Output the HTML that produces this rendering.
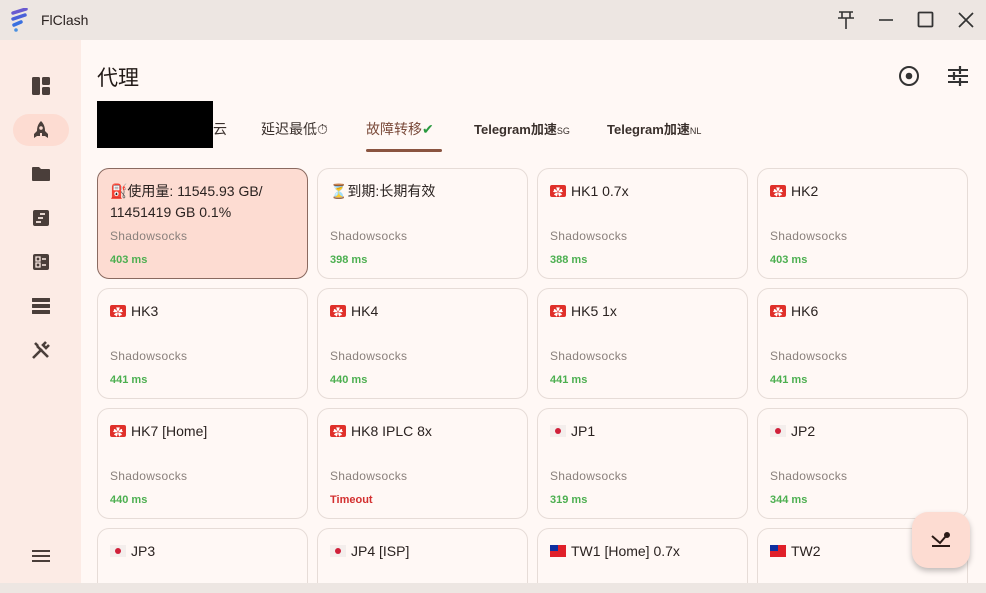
<!DOCTYPE html>
<html><head><meta charset="utf-8"><style>
*{box-sizing:border-box;margin:0;padding:0}
body{width:986px;height:593px;overflow:hidden;background:#fff8f5;font-family:"Liberation Sans","Noto Sans CJK SC",sans-serif;color:#221a17;position:relative}
.tb{position:absolute;left:0;top:0;width:986px;height:40px;background:#ede6e2}
.tb .t{position:absolute;left:41px;top:12px;font-size:14px;color:#2a2220}
.sb{position:absolute;left:0;top:40px;width:81px;height:553px;background:#fcebe5}
.ic{position:absolute;left:31px;width:20px;height:20px}
.main{position:absolute;left:81px;top:40px;width:905px;height:543px;overflow:hidden}
h1{position:absolute;left:16px;top:22px;font-size:21px;font-weight:400}
.tab{position:absolute;top:79px;font-size:14px;color:#3a302c}
.card{position:absolute;width:211px;height:111px;border:1px solid #e6dcd7;border-radius:12px;background:#fff8f5}
.card.sel{background:#fddcd2;border-color:#8a6a60}
.card .n{position:absolute;left:12px;top:12px;font-size:14px;line-height:21px;color:#2a2220}
.card .p{position:absolute;left:12px;top:60px;font-size:12px;color:#8a807c;letter-spacing:.3px}
.card .m{position:absolute;left:12px;top:85px;font-size:11px;color:#4caf50;font-weight:bold}
.card .m.r{color:#d32f2f}
.hk{display:inline-block;width:16px;height:12px;background:#e0302a;border-radius:2px;vertical-align:-1px;margin-right:5px;position:relative}
.hk:after{content:"✿";position:absolute;left:3px;top:-2px;color:#fff;font-size:10px}
.jp{display:inline-block;width:16px;height:12px;background:#f4eeec;vertical-align:-1px;margin-right:5px;position:relative}
.jp:after{content:"";position:absolute;left:5px;top:3px;width:6px;height:6px;border-radius:50%;background:#d0203a}
.tw{display:inline-block;width:16px;height:12px;background:#e0202a;vertical-align:-1px;margin-right:5px;position:relative}
.tw:after{content:"";position:absolute;left:0;top:0;width:8px;height:6px;background:#1030a0}
.fab{position:absolute;left:912px;top:512px;width:58px;height:56px;border-radius:16px;background:#fddcd2;box-shadow:0 3px 6px rgba(0,0,0,.25)}
</style></head><body>
<div class="tb">
<svg style="position:absolute;left:10px;top:8px" width="20" height="24" viewBox="0 0 20 24"><path d="M3 5 L16 1" stroke="#6a5ad0" stroke-width="3.5" stroke-linecap="round"/><path d="M3 11 L15 7" stroke="#4a60d8" stroke-width="3.5" stroke-linecap="round"/><path d="M4 17 L11 14" stroke="#3a70e0" stroke-width="3.5" stroke-linecap="round"/><circle cx="6" cy="22" r="1.8" fill="#4a90e0"/></svg>
<div class="t">FlClash</div>
<svg style="position:absolute;left:836px;top:10px" width="20" height="20" viewBox="0 0 20 20" fill="none" stroke="#333" stroke-width="1.6"><path d="M3 2h14M6 2v6h8V2M2 8h16M10 8v11"/></svg>
<svg style="position:absolute;left:876px;top:10px" width="20" height="20"><path d="M3 10h14" stroke="#333" stroke-width="1.6"/></svg>
<svg style="position:absolute;left:916px;top:10px" width="20" height="20"><rect x="2.5" y="2.5" width="14" height="14" rx="1" fill="none" stroke="#333" stroke-width="1.8"/></svg>
<svg style="position:absolute;left:956px;top:10px" width="20" height="20"><path d="M3 3l14 14M17 3L3 17" stroke="#333" stroke-width="1.7"/></svg>
</div>
<div class="sb">
<svg class="ic" style="top:36px" viewBox="0 0 20 20" fill="#4a3e3a"><rect x="1" y="1" width="8" height="18" rx="1.5"/><rect x="11" y="1" width="8" height="8" rx="1.5"/><rect x="11" y="11" width="8" height="8" rx="1.5"/></svg>
<div style="position:absolute;left:13px;top:74px;width:56px;height:32px;border-radius:16px;background:#fddcd2"></div>
<svg class="ic" style="top:80px" viewBox="0 0 20 20" fill="#4a3e3a"><path d="M10 1c3 3 4 6 4 10l3 3v4l-3-2H6l-3 2v-4l3-3c0-4 1-7 4-10z"/><circle cx="10" cy="8" r="1.8" fill="#fddcd2"/><rect x="9" y="13" width="2" height="5" fill="#fddcd2"/></svg>
<svg class="ic" style="top:124px" viewBox="0 0 20 20" fill="#4a3e3a"><path d="M1 4a1 1 0 0 1 1-1h6l2 2h8a1 1 0 0 1 1 1v10a1 1 0 0 1-1 1H2a1 1 0 0 1-1-1z"/></svg>
<svg class="ic" style="top:168px" viewBox="0 0 20 20"><rect x="2" y="2" width="16" height="16" rx="2" fill="#4a3e3a"/><path d="M9 6h5M7 10h5M5 14h5" stroke="#fcebe5" stroke-width="1.8"/></svg>
<svg class="ic" style="top:212px" viewBox="0 0 20 20"><rect x="2" y="2" width="16" height="16" rx="2" fill="#4a3e3a"/><path d="M5 5h4v4H5zM5 11h4v4H5z" stroke="#fcebe5" stroke-width="1.3" fill="none"/><path d="M11 7h4M11 13h4" stroke="#fcebe5" stroke-width="1.6"/></svg>
<svg class="ic" style="top:256px" viewBox="0 0 20 20" fill="#4a3e3a"><rect x="1" y="2" width="18" height="4" rx=".5"/><rect x="1" y="8" width="18" height="4" rx=".5"/><rect x="1" y="14" width="18" height="4" rx=".5"/></svg>
<svg class="ic" style="top:300px" viewBox="0 0 20 20" stroke="#4a3e3a" stroke-width="2.6" fill="none"><path d="M2 18l9-9M15 2l-3 3 3 3 3-3M4 3l3 3M6 6l11 11"/></svg>
<svg class="ic" style="top:506px" viewBox="0 0 20 20"><path d="M1 5h18M1 10h18M1 15h18" stroke="#4a3e3a" stroke-width="2"/></svg>
</div>
<div class="main">
<h1>代理</h1>
<svg style="position:absolute;left:817px;top:25px" width="22" height="22"><circle cx="11" cy="11" r="9" fill="none" stroke="#333" stroke-width="2"/><circle cx="11" cy="11" r="3.3" fill="#333"/></svg>
<svg style="position:absolute;left:866px;top:25px" width="22" height="22" stroke="#333" stroke-width="2"><path d="M1 5h20M1 11h20M1 17h20" /><path d="M13 1v8M7 7v8M13 13v8" stroke-width="2.2"/></svg>
<div style="position:absolute;left:16px;top:61px;width:116px;height:47px;background:#000"></div>
<div class="tab" style="left:132px">云</div>
<div class="tab" style="left:180px">延迟最低⏱</div>
<div class="tab" style="left:285px;color:#7a4a3a">故障转移<span style="color:#2a9a40">✔</span></div>
<div style="position:absolute;left:285px;top:109px;width:76px;height:3px;background:#8a5440;border-radius:2px"></div>
<div class="tab" style="left:393px;font-weight:bold;font-size:13px">Telegram加速<span style="font-size:9px;font-weight:normal">SG</span></div>
<div class="tab" style="left:526px;font-weight:bold;font-size:13px">Telegram加速<span style="font-size:9px;font-weight:normal">NL</span></div>

<div class="card sel" style="left:16px;top:128px"><div class="n">⛽使用量: 11545.93 GB/<br>11451419 GB 0.1%</div><div class="p">Shadowsocks</div><div class="m">403 ms</div></div>
<div class="card" style="left:236px;top:128px"><div class="n">⏳到期:长期有效</div><div class="p">Shadowsocks</div><div class="m">398 ms</div></div>
<div class="card" style="left:456px;top:128px"><div class="n"><span class="hk"></span>HK1 0.7x</div><div class="p">Shadowsocks</div><div class="m">388 ms</div></div>
<div class="card" style="left:676px;top:128px"><div class="n"><span class="hk"></span>HK2</div><div class="p">Shadowsocks</div><div class="m">403 ms</div></div>

<div class="card" style="left:16px;top:248px"><div class="n"><span class="hk"></span>HK3</div><div class="p">Shadowsocks</div><div class="m">441 ms</div></div>
<div class="card" style="left:236px;top:248px"><div class="n"><span class="hk"></span>HK4</div><div class="p">Shadowsocks</div><div class="m">440 ms</div></div>
<div class="card" style="left:456px;top:248px"><div class="n"><span class="hk"></span>HK5 1x</div><div class="p">Shadowsocks</div><div class="m">441 ms</div></div>
<div class="card" style="left:676px;top:248px"><div class="n"><span class="hk"></span>HK6</div><div class="p">Shadowsocks</div><div class="m">441 ms</div></div>

<div class="card" style="left:16px;top:368px"><div class="n"><span class="hk"></span>HK7 [Home]</div><div class="p">Shadowsocks</div><div class="m">440 ms</div></div>
<div class="card" style="left:236px;top:368px"><div class="n"><span class="hk"></span>HK8 IPLC 8x</div><div class="p">Shadowsocks</div><div class="m r">Timeout</div></div>
<div class="card" style="left:456px;top:368px"><div class="n"><span class="jp"></span>JP1</div><div class="p">Shadowsocks</div><div class="m">319 ms</div></div>
<div class="card" style="left:676px;top:368px"><div class="n"><span class="jp"></span>JP2</div><div class="p">Shadowsocks</div><div class="m">344 ms</div></div>

<div class="card" style="left:16px;top:488px"><div class="n"><span class="jp"></span>JP3</div></div>
<div class="card" style="left:236px;top:488px"><div class="n"><span class="jp"></span>JP4 [ISP]</div></div>
<div class="card" style="left:456px;top:488px"><div class="n"><span class="tw"></span>TW1 [Home] 0.7x</div></div>
<div class="card" style="left:676px;top:488px"><div class="n"><span class="tw"></span>TW2</div></div>
</div>
<div class="fab"><svg style="position:absolute;left:19px;top:19px" width="20" height="18" stroke="#2a1a16" stroke-width="2" fill="none"><path d="M1 5l8 7 6-7M1 15h18"/><circle cx="16" cy="4" r="2" fill="#2a1a16"/></svg></div>
<div style="position:absolute;left:0;top:583px;width:986px;height:10px;background:#ede6e2"></div>
</body></html>
